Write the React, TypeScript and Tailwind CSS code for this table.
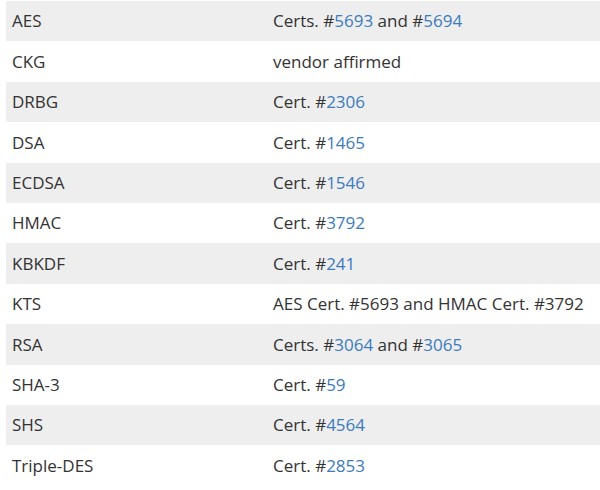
const rows: { name: string; cert: (string | { link: string })[] }[] = [
  { name: 'AES', cert: ['Certs. #', { link: '5693' }, ' and #', { link: '5694' }] },
  { name: 'CKG', cert: ['vendor affirmed'] },
  { name: 'DRBG', cert: ['Cert. #', { link: '2306' }] },
  { name: 'DSA', cert: ['Cert. #', { link: '1465' }] },
  { name: 'ECDSA', cert: ['Cert. #', { link: '1546' }] },
  { name: 'HMAC', cert: ['Cert. #', { link: '3792' }] },
  { name: 'KBKDF', cert: ['Cert. #', { link: '241' }] },
  { name: 'KTS', cert: ['AES Cert. #5693 and HMAC Cert. #3792'] },
  { name: 'RSA', cert: ['Certs. #', { link: '3064' }, ' and #', { link: '3065' }] },
  { name: 'SHA-3', cert: ['Cert. #', { link: '59' }] },
  { name: 'SHS', cert: ['Cert. #', { link: '4564' }] },
  { name: 'Triple-DES', cert: ['Cert. #', { link: '2853' }] },
];

export default function App() {
  return (
    <div className="w-[600px] h-[490px] bg-white pl-[6px] pt-[1px] overflow-hidden" style={{ fontFamily: '"Open Sans", sans-serif' }}>
      <table className="w-full border-collapse text-[17px] text-[#333]">
        <tbody>
          {rows.map((r, i) => (
            <tr key={r.name} className={`h-[40.4px] ${i % 2 === 0 ? 'bg-[#eeeeee]' : 'bg-white'}`}>
              <td className="w-[261px] pl-[6px] align-middle">{r.name}</td>
              <td className="pl-[6px] align-middle whitespace-nowrap">
                {r.cert.map((c, j) =>
                  typeof c === 'string' ? <span key={j}>{c}</span> : <a key={j} href="#" className="text-[#3c7bbd]">{c.link}</a>
                )}
              </td>
            </tr>
          ))}
        </tbody>
      </table>
    </div>
  );
}
